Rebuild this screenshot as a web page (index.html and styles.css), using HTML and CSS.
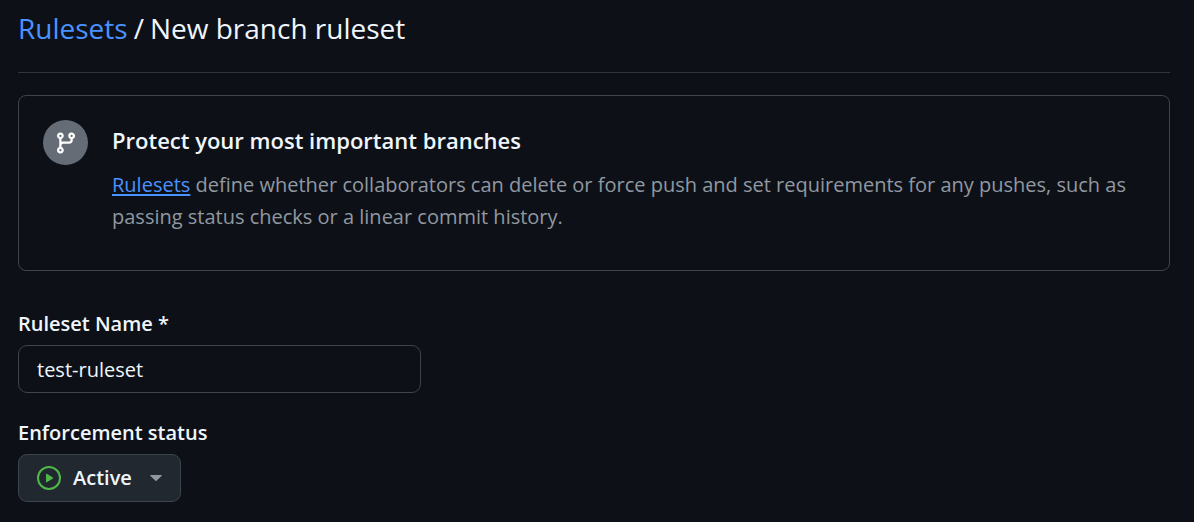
FILE: index.html
```html
<!DOCTYPE html>
<html lang="en">
<head>
<meta charset="utf-8">
<meta name="viewport" content="width=device-width, initial-scale=1">
<title>New branch ruleset</title>
<link rel="stylesheet" href="styles.css">
</head>
<body>
<main class="page">
  <header class="page-header">
    <h1 class="title"><a class="link" href="#">Rulesets</a><span class="separator">/</span><span>New branch ruleset</span></h1>
  </header>
  <section class="notice">
    <span class="notice-icon">
      <svg width="24" height="24" viewBox="0 0 16 16" fill="currentColor" aria-hidden="true"><path d="M9.5 3.25a2.25 2.25 0 1 1 3 2.122V6A2.5 2.5 0 0 1 10 8.5H6a1 1 0 0 0-1 1v1.128a2.251 2.251 0 1 1-1.5 0V5.372a2.25 2.25 0 1 1 1.5 0v1.836A2.493 2.493 0 0 1 6 7h4a1 1 0 0 0 1-1v-.628A2.25 2.25 0 0 1 9.5 3.25Zm-6 0a.75.75 0 1 0 1.5 0 .75.75 0 0 0-1.5 0Zm8.25-.75a.75.75 0 1 0 0 1.5.75.75 0 0 0 0-1.5ZM4.25 12a.75.75 0 1 0 0 1.5.75.75 0 0 0 0-1.5Z"/></svg>
    </span>
    <div class="notice-body">
      <h2 class="notice-title">Protect your most important branches</h2>
      <p class="notice-text"><a class="link link-underlined" href="#">Rulesets</a> define whether collaborators can delete or force push and set requirements for any pushes, such as passing status checks or a linear commit history.</p>
    </div>
  </section>
  <form class="form">
    <div class="field">
      <label class="label" for="ruleset-name">Ruleset Name *</label>
      <input class="input" id="ruleset-name" type="text" value="test-ruleset" required>
    </div>
    <div class="field">
      <label class="label" id="status-label" for="status">Enforcement status</label>
      <button class="menu-button" id="status" type="button" aria-haspopup="menu" aria-labelledby="status-label status">
        <svg class="status-icon" width="24" height="24" viewBox="0 0 24 24" aria-hidden="true"><circle cx="12" cy="12" r="11" fill="none" stroke="currentColor" stroke-width="2"/><path d="M9 8.3v7.4c0 .5.5.7.9.5l6-3.8c.3-.2.3-.6 0-.8l-6-3.8c-.4-.2-.9 0-.9.5Z" fill="currentColor"/></svg>
        <span>Active</span>
        <svg class="caret" width="12" height="6" viewBox="0 0 12 6" fill="currentColor" aria-hidden="true"><path d="M.8 0h10.4c.6 0 .8.6.4 1L6.5 5.8c-.3.3-.7.3-1 0L.4 1C0 .6.2 0 .8 0Z"/></svg>
      </button>
    </div>
  </form>
</main>
</body>
</html>
```
FILE: styles.css
```css
* {
  box-sizing: border-box;
}

body {
  margin: 0;
  background: #0d1117;
  color: #f0f6fc;
  font-family: "Segoe UI", "Open Sans", "Noto Sans", sans-serif;
  font-size: 20px;
  line-height: 32px;
}

.page {
  padding: 8px 24px 20px 18px;
}

.page-header {
  padding-bottom: 24px;
  border-bottom: 1px solid #2f353d;
}

.title {
  display: flex;
  flex-wrap: wrap;
  gap: 6px;
  margin: 0;
  font-size: 28px;
  font-weight: 400;
  line-height: 40px;
}

.link {
  color: #4a92ff;
  text-decoration: none;
}

.link-underlined {
  text-decoration: underline;
  text-decoration-thickness: 2px;
  text-underline-offset: 2px;
}

.notice {
  display: flex;
  gap: 24px;
  margin-top: 22px;
  padding: 24px 24px 37px;
  border: 1px solid #3d444d;
  border-radius: 8px;
}

.notice-icon {
  display: flex;
  flex: none;
  align-items: center;
  justify-content: center;
  width: 45px;
  height: 45px;
  border-radius: 50%;
  background: #656c76;
  color: #ffffff;
}

.notice-title {
  margin: 4px 0 13px;
  font-size: 22px;
  font-weight: 600;
  line-height: 32px;
}

.notice-text {
  margin: 0;
  color: #9198a1;
}

.form {
  display: flex;
  flex-direction: column;
  gap: 24px;
  margin-top: 37px;
}

.field {
  display: flex;
  flex-direction: column;
  align-items: flex-start;
  gap: 5px;
}

.label {
  font-weight: 600;
}

.input,
.menu-button {
  height: 48px;
  padding: 0 18px;
  border: 1px solid #3d444d;
  border-radius: 9px;
  color: #f0f6fc;
  font: inherit;
}

.input {
  width: 100%;
  max-width: 403px;
  background: #0d1117;
}

.menu-button {
  display: flex;
  align-items: center;
  gap: 12px;
  background: #212830;
  font-weight: 600;
}

.status-icon {
  color: #4fb848;
}

.caret {
  margin-left: 6px;
  color: #9198a1;
}
```
